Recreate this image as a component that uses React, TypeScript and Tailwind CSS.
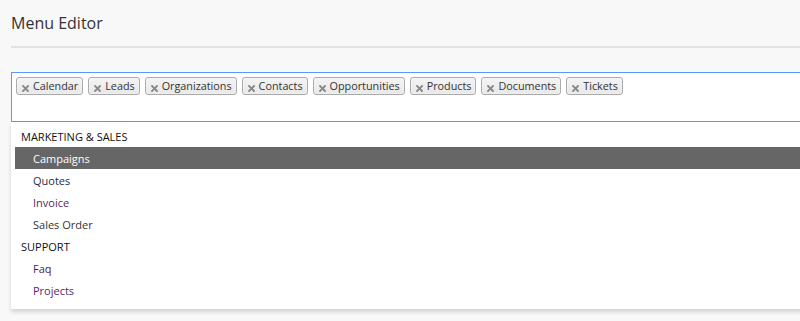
import React from "react";

const tags = ["Calendar", "Leads", "Organizations", "Contacts", "Opportunities", "Products", "Documents", "Tickets"];

const groups = [
    {
        label: "MARKETING & SALES",
        items: [
            { name: "Campaigns", color: "text-white", active: true },
            { name: "Quotes", color: "text-[#2b2b3d]" },
            { name: "Invoice", color: "text-[#5e1f62]" },
            { name: "Sales Order", color: "text-[#333333]" },
        ],
    },
    {
        label: "SUPPORT",
        items: [
            { name: "Faq", color: "text-[#4a1d55]" },
            { name: "Projects", color: "text-[#571f66]" },
        ],
    },
];

const CloseIcon = () => (
    <svg width="7" height="7" viewBox="0 0 7 7" className="absolute left-[5px] top-[7px]">
        <path d="M1 1 L6 6 M6 1 L1 6" stroke="#8a8a8a" strokeWidth="1.9" strokeLinecap="square" />
    </svg>
);

const Tag = (props: any) => {
    return (
        <li className="relative h-[18px] pl-[16px] pr-[4px] border border-[#aaa] rounded-[3px] bg-gradient-to-b from-[#f4f4f4] to-[#e8e8e8] text-[10.8px] leading-[16px] text-[#333] shadow-[0_0_2px_#fff_inset]">
            <CloseIcon />
            {props.label}
        </li>
    );
};

const App = () => {
    return (
        <div className="w-[800px] h-[321px] overflow-hidden bg-[#f8f8f8] font-['Open_Sans',sans-serif]">
            <div className="pl-[11px] pt-[11px]">
                <h1 className="text-[16px] leading-[24px] text-[#333]">Menu Editor</h1>
                <div className="mt-[11px] h-[2px] bg-[#e2e2e2] -mr-[20px]" />
            </div>

            <div className="pl-[11px] mt-[24px] -mr-[20px]">
                {/* Selected tags */}
                <div className="h-[50px] border border-[#5897fb] bg-white px-[4px] pt-[4px]">
                    <ul className="flex gap-[5px]">
                        {tags.map((t) => <Tag key={t} label={t} />)}
                    </ul>
                </div>

                {/* Dropdown */}
                <div className="bg-white pt-[3px] pb-[8px] pl-[4px] shadow-[0_3px_4px_rgba(0,0,0,0.15)]">
                    {groups.map((g) => (
                        <div key={g.label}>
                            <div className="h-[22px] pl-[6px] text-[11px] leading-[23px] text-[#111]">{g.label}</div>
                            {g.items.map((item: any) => (
                                <div
                                    key={item.name}
                                    className={
                                        item.active
                                            ? "h-[22px] pl-[18px] text-[11px] leading-[23px] bg-[#666666] text-white"
                                            : "h-[22px] pl-[18px] text-[11px] leading-[23px] " + item.color
                                    }
                                >
                                    {item.name}
                                </div>
                            ))}
                        </div>
                    ))}
                </div>
            </div>
        </div>
    );
};

export default App;
